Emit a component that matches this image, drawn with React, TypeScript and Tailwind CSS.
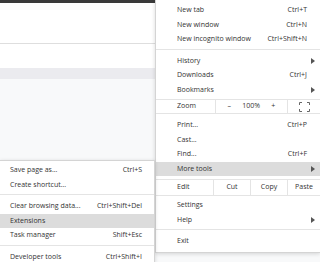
import React from 'react';

const font = { fontFamily: '"Open Sans", "Noto Sans", Arial, sans-serif' };

function Arrow() {
  return (
    <svg width="4" height="6" viewBox="0 0 4 6" className="shrink-0">
      <path d="M0 0 L4 3 L0 6 Z" fill="#555" />
    </svg>
  );
}

function Item({ label, shortcut, arrow, active, sub }: { label: string; shortcut?: string; arrow?: boolean; active?: boolean; sub?: boolean }) {
  return (
    <div
      className={`h-[14.5px] flex items-center justify-between ${sub ? 'pl-[10px] pr-[12px]' : 'pl-[21px] pr-[13px]'} ${active ? 'bg-[#dcdcdc]' : ''}`}
    >
      <span>{label}</span>
      {shortcut && <span>{shortcut}</span>}
      {arrow && (
        <span className="-mr-[8px]">
          <Arrow />
        </span>
      )}
    </div>
  );
}

function Sep() {
  return (
    <div className="pt-[2px] pb-[4px]">
      <div className="h-px bg-[#e4e4e4]" />
    </div>
  );
}

function FullscreenIcon() {
  return (
    <svg width="11" height="10" viewBox="0 0 11 10" fill="none" stroke="#666" strokeWidth="1">
      <path d="M0.5 3 V0.5 H3" />
      <path d="M8 0.5 H10.5 V3" />
      <path d="M10.5 7 V9.5 H8" />
      <path d="M3 9.5 H0.5 V7" />
    </svg>
  );
}

export default function App() {
  return (
    <div className="relative w-[320px] h-[262px] overflow-hidden bg-[#f8f9fa] text-[7px] text-[#333]" style={font}>
      <div className="h-[3px] bg-[#3a3a3a]" />
      <div className="h-[40px] bg-white" />
      <div className="h-px bg-[#dedede]" />
      <div className="h-[24px] bg-white" />
      <div className="h-[11px] bg-[#ebebef]" />

      {/* main menu */}
      <div className="absolute left-[155px] top-0 w-[165px] bg-white border-l border-b border-[#d4d4d4] shadow-[0_1px_4px_rgba(0,0,0,0.15)] pt-[3px] pb-[3px]">
        <Item label="New tab" shortcut="Ctrl+T" />
        <Item label="New window" shortcut="Ctrl+N" />
        <Item label="New incognito window" shortcut="Ctrl+Shift+N" />
        <Sep />
        <Item label="History" arrow />
        <Item label="Downloads" shortcut="Ctrl+J" />
        <Item label="Bookmarks" arrow />
        <div className="pt-[2px]">
          <div className="h-px bg-[#e4e4e4]" />
        </div>
        <div className="h-[13px] flex items-stretch">
          <div className="w-[59px] pl-[21px] flex items-center">Zoom</div>
          <div className="w-[72px] border-l border-[#e4e4e4] flex items-center justify-around px-[6px]">
            <span>–</span>
            <span>100%</span>
            <span>+</span>
          </div>
          <div className="flex-1 border-l border-[#e4e4e4] flex items-center justify-center">
            <FullscreenIcon />
          </div>
        </div>
        <div className="pb-[4px]">
          <div className="h-px bg-[#e4e4e4]" />
        </div>
        <Item label="Print..." shortcut="Ctrl+P" />
        <Item label="Cast..." />
        <Item label="Find..." shortcut="Ctrl+F" />
        <Item label="More tools" arrow active />
        <div className="pt-[3px]">
          <div className="h-px bg-[#e4e4e4]" />
        </div>
        <div className="h-[15px] flex items-stretch">
          <div className="w-[57px] pl-[21px] flex items-center">Edit</div>
          <div className="w-[37px] border-l border-[#e4e4e4] flex items-center justify-center">Cut</div>
          <div className="w-[37px] border-l border-[#e4e4e4] flex items-center justify-center">Copy</div>
          <div className="flex-1 border-l border-[#e4e4e4] flex items-center justify-center">Paste</div>
        </div>
        <div className="pb-[2px]">
          <div className="h-px bg-[#e4e4e4]" />
        </div>
        <Item label="Settings" />
        <Item label="Help" arrow />
        <Sep />
        <Item label="Exit" />
      </div>

      {/* more tools submenu */}
      <div className="absolute left-0 top-[160px] w-[155px] bg-white border-t border-r border-[#d4d4d4] shadow-[0_1px_4px_rgba(0,0,0,0.15)] pt-[2px]">
        <Item sub label="Save page as..." shortcut="Ctrl+S" />
        <Item sub label="Create shortcut..." />
        <Sep />
        <Item sub label="Clear browsing data..." shortcut="Ctrl+Shift+Del" />
        <Item sub label="Extensions" active />
        <Item sub label="Task manager" shortcut="Shift+Esc" />
        <Sep />
        <Item sub label="Developer tools" shortcut="Ctrl+Shift+I" />
      </div>
    </div>
  );
}
